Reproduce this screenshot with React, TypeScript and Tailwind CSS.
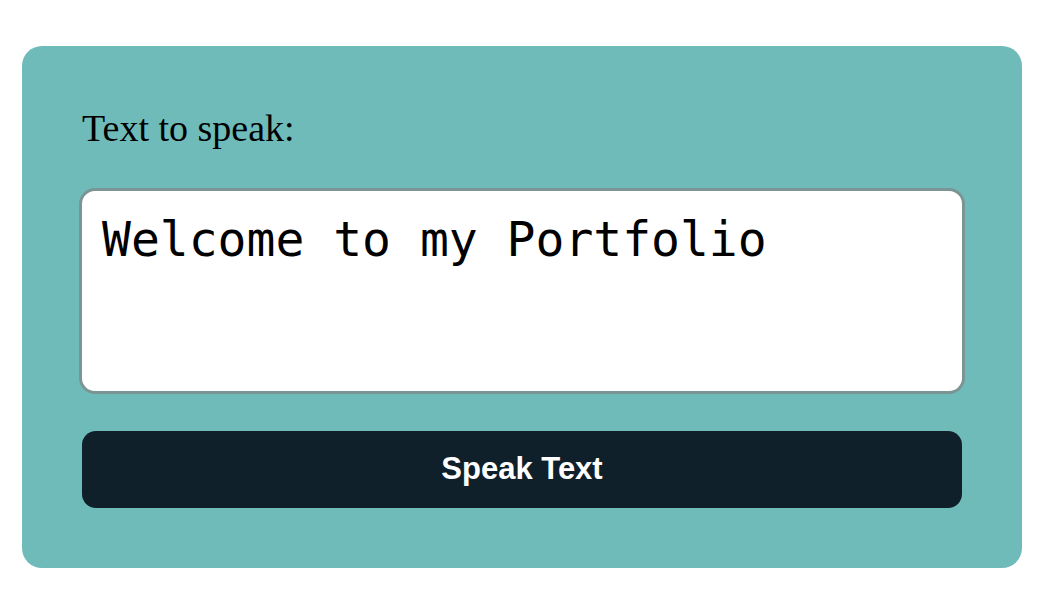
import { useState } from 'react';

export default function App() {
  const [text, setText] = useState('Welcome to my Portfolio');

  const speak = () => {
    if (typeof window !== 'undefined' && 'speechSynthesis' in window) {
      window.speechSynthesis.speak(new SpeechSynthesisUtterance(text));
    }
  };

  return (
    <div className="min-h-screen bg-white pt-[46px] pl-[22px]">
      <div className="w-[1000px] rounded-[20px] bg-[#6fbbb9] px-[60px] pt-[60px] pb-[60px] flex flex-col">
        <label
          htmlFor="speech-text"
          className="block text-[38px] leading-[44px] text-black mb-[38px] font-['Liberation_Serif',serif]"
        >
          Text to speak:
        </label>
        <textarea
          id="speech-text"
          value={text}
          onChange={(e) => setText(e.target.value)}
          className="-mx-[3px] h-[206px] resize-none rounded-[16px] border-[3px] border-[#7a9594] bg-white p-[20px] text-[48px] leading-[56px] text-black outline-none font-['DejaVu_Sans_Mono',monospace]"
        />
        <button
          onClick={speak}
          className="mt-[37px] h-[77px] w-full rounded-[14px] bg-[#10202a] text-[31px] font-bold text-white font-['Liberation_Sans',Arial,sans-serif]"
        >
          Speak Text
        </button>
      </div>
    </div>
  );
}
